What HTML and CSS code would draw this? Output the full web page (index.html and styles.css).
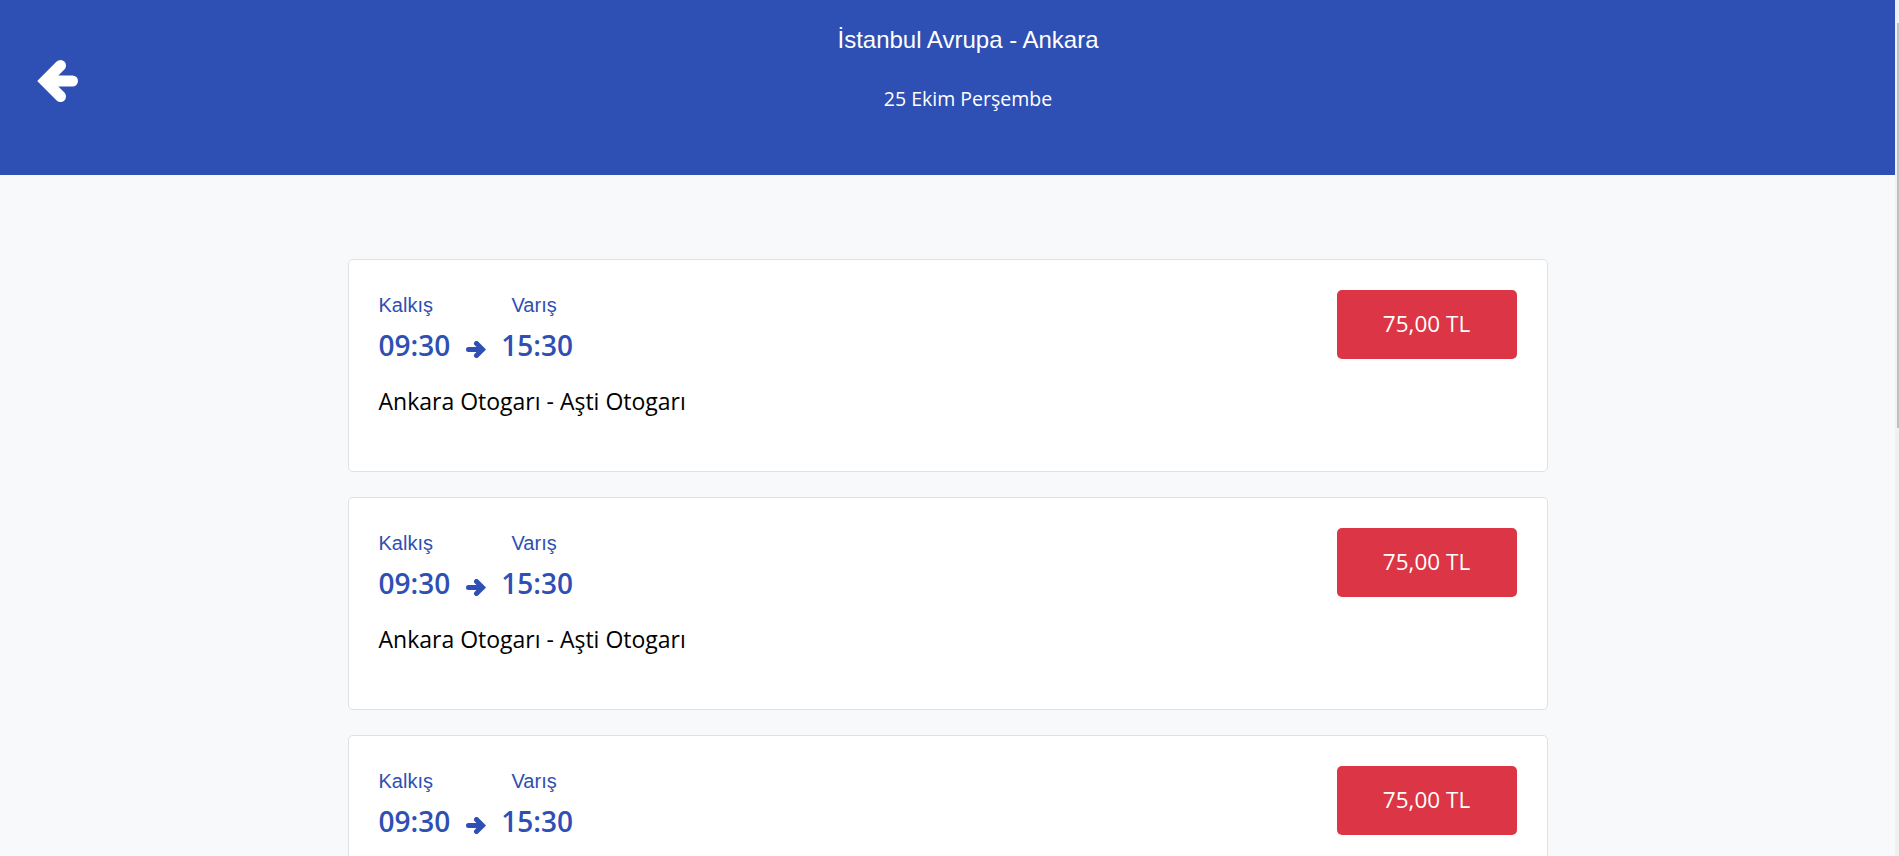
FILE: index.html
```html
<!DOCTYPE html>
<html lang="tr">
<head>
<meta charset="utf-8">
<title>İstanbul Avrupa - Ankara</title>
<link rel="stylesheet" href="styles.css">
</head>
<body>
<header class="topbar">
  <a class="back" href="#" aria-label="Geri">
    <svg width="41" height="43" viewBox="0 0 41 43" aria-hidden="true">
      <path d="M23.5 5.5 L8 21 L23.5 36.5 M8 21 H35.5" fill="none" stroke="#fff" stroke-width="11" stroke-linecap="round" stroke-linejoin="miter"/>
    </svg>
  </a>
  <div class="route">
    <h1 class="route-title">İstanbul Avrupa - Ankara</h1>
    <p class="route-date">25 Ekim Perşembe</p>
  </div>
</header>

<main class="trips">
  <article class="trip">
    <div class="trip-info">
      <div class="trip-labels"><span class="label label-dep">Kalkış</span><span class="label">Varış</span></div>
      <div class="trip-times">
        <span class="time">09:30</span>
        <svg class="time-arrow" width="20" height="17" viewBox="0 0 20 17" aria-hidden="true"><path d="M10.5 2.5 L16.5 8.5 L10.5 14.5 M2.5 8.5 H16.5"/></svg>
        <span class="time">15:30</span>
      </div>
      <p class="trip-stations">Ankara Otogarı - Aşti Otogarı</p>
    </div>
    <button class="price" type="button">75,00 TL</button>
  </article>

  <article class="trip">
    <div class="trip-info">
      <div class="trip-labels"><span class="label label-dep">Kalkış</span><span class="label">Varış</span></div>
      <div class="trip-times">
        <span class="time">09:30</span>
        <svg class="time-arrow" width="20" height="17" viewBox="0 0 20 17" aria-hidden="true"><path d="M10.5 2.5 L16.5 8.5 L10.5 14.5 M2.5 8.5 H16.5"/></svg>
        <span class="time">15:30</span>
      </div>
      <p class="trip-stations">Ankara Otogarı - Aşti Otogarı</p>
    </div>
    <button class="price" type="button">75,00 TL</button>
  </article>

  <article class="trip">
    <div class="trip-info">
      <div class="trip-labels"><span class="label label-dep">Kalkış</span><span class="label">Varış</span></div>
      <div class="trip-times">
        <span class="time">09:30</span>
        <svg class="time-arrow" width="20" height="17" viewBox="0 0 20 17" aria-hidden="true"><path d="M10.5 2.5 L16.5 8.5 L10.5 14.5 M2.5 8.5 H16.5"/></svg>
        <span class="time">15:30</span>
      </div>
      <p class="trip-stations">Ankara Otogarı - Aşti Otogarı</p>
    </div>
    <button class="price" type="button">75,00 TL</button>
  </article>
</main>
<div class="scroll-thumb" aria-hidden="true"></div>
</body>
</html>
```

FILE: styles.css
```css
* {
  box-sizing: border-box;
}

html {
  background: #f1f1f1;
}

body {
  margin: 0 4px 0 0;
  background: #f8f9fa;
  font-family: "Open Sans", "Noto Sans", sans-serif;
  color: #000;
}

.scroll-thumb {
  position: fixed;
  top: 23px;
  right: 0;
  width: 2px;
  height: 405px;
  background: #c1c1c1;
}

.topbar {
  display: flex;
  align-items: flex-start;
  height: 175px;
  padding: 26px 37px 0;
  background: #2e4fb3;
  color: #fff;
}

.back {
  display: block;
  width: 41px;
  height: 43px;
  margin-top: 34px;
}

.back svg {
  display: block;
}

.route {
  flex: 1;
  text-align: center;
}

.route-title {
  margin: 0;
  font-family: "Liberation Sans", Arial, sans-serif;
  font-weight: 400;
  font-size: 24px;
  line-height: 28px;
}

.route-date {
  margin: 30px 0 0;
  font-size: 19.5px;
  line-height: 29px;
}

.trips {
  padding: 84px 0 25px;
}

.trip {
  display: flex;
  justify-content: space-between;
  align-items: flex-start;
  width: 1200px;
  margin: 0 auto 25px;
  padding: 30px;
  background: #fff;
  border: 1px solid #dee2e6;
  border-radius: 5px;
}

.trip-labels {
  display: flex;
  font-family: "Liberation Sans", Arial, sans-serif;
  font-size: 20px;
  line-height: 30px;
  color: #2e4fb3;
}

.label-dep {
  width: 133px;
}

.trip-times {
  display: flex;
  align-items: flex-start;
  margin-top: 9px;
  color: #2e4fb3;
  font-size: 28px;
  font-weight: 600;
  line-height: 33.6px;
}

.time-arrow {
  display: block;
  margin: 12px 15px 0 16px;
  fill: none;
  stroke: #2e4fb3;
  stroke-width: 5;
  stroke-linecap: round;
  stroke-linejoin: miter;
}

.trip-stations {
  margin: 21px 0 23px;
  font-size: 23px;
  line-height: 34.5px;
  color: #000;
}

.price {
  width: 180px;
  height: 69px;
  padding: 0;
  border: 0;
  border-radius: 5px;
  background: #dc3545;
  color: #fff;
  font-family: "Open Sans", "Noto Sans", sans-serif;
  font-size: 22.5px;
  line-height: 1;
}
```
